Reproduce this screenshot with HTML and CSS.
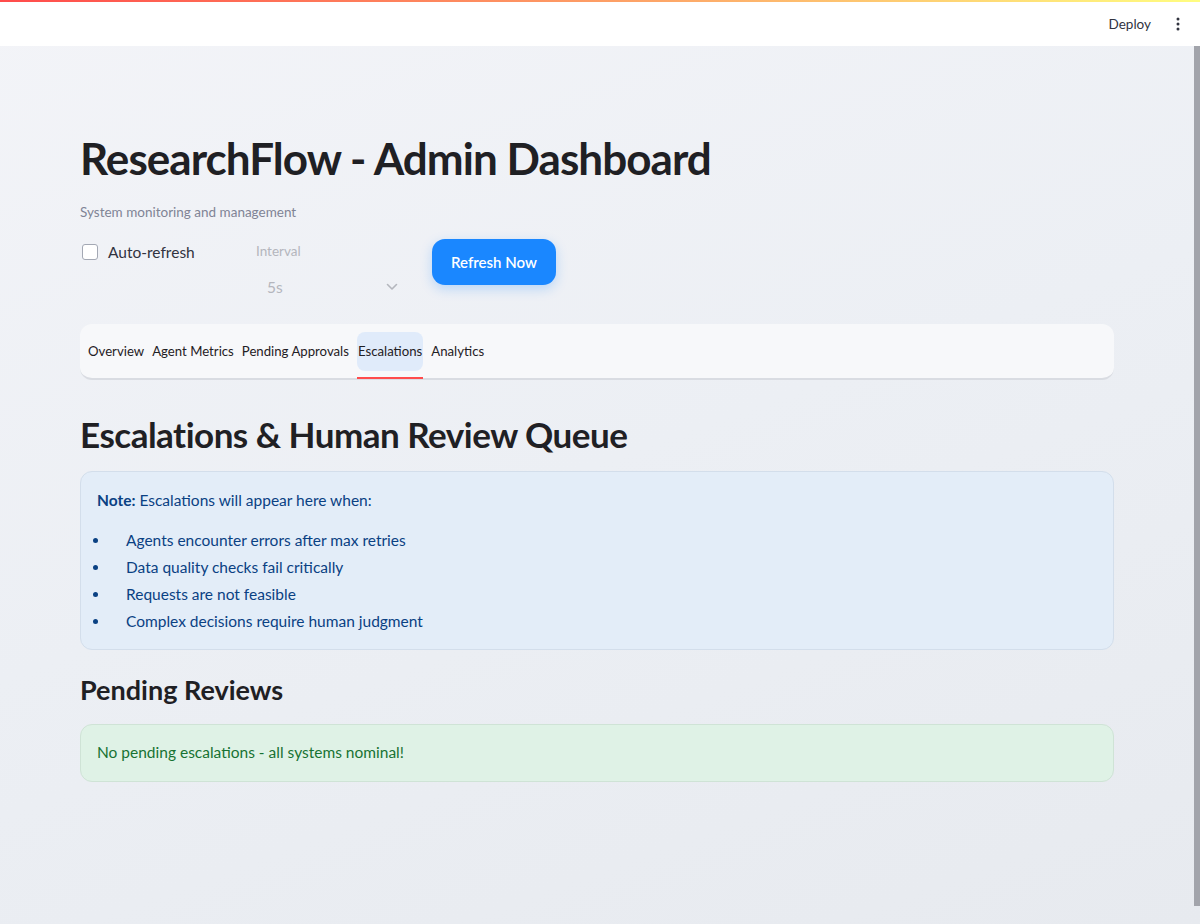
FILE: index.html
```html
<!DOCTYPE html>
<html lang="en">
<head>
<meta charset="utf-8">
<title>ResearchFlow - Admin Dashboard</title>
<link rel="stylesheet" href="styles.css">
</head>
<body>
<div class="app">
  <header class="topbar">
    <div class="decoration"></div>
    <div class="toolbar">
      <span class="deploy">Deploy</span>
      <span class="menu" aria-label="Main menu">
        <svg width="4" height="14" viewBox="0 0 4 14"><circle cx="2" cy="2" r="1.5" fill="#31333f"/><circle cx="2" cy="7" r="1.5" fill="#31333f"/><circle cx="2" cy="12" r="1.5" fill="#31333f"/></svg>
      </span>
    </div>
  </header>
  <main class="main">
    <div class="block">
      <h1 class="title">ResearchFlow - Admin Dashboard</h1>
      <p class="caption">System monitoring and management</p>

      <div class="controls">
        <label class="checkbox">
          <span class="box"></span>
          <span class="cb-label">Auto-refresh</span>
        </label>
        <div class="select">
          <div class="select-label">Interval</div>
          <div class="select-field">
            <span>5s</span>
            <svg width="12" height="8" viewBox="0 0 12 8"><path d="M1.5 1.5 L6 6 L10.5 1.5" fill="none" stroke="#b4b6bd" stroke-width="1.6" stroke-linecap="round" stroke-linejoin="round"/></svg>
          </div>
        </div>
        <button class="btn">Refresh Now</button>
      </div>

      <nav class="tabs">
        <span class="tab">Overview</span>
        <span class="tab">Agent Metrics</span>
        <span class="tab">Pending Approvals</span>
        <span class="tab active">Escalations</span>
        <span class="tab">Analytics</span>
      </nav>

      <h2 class="h2">Escalations &amp; Human Review Queue</h2>

      <div class="alert info">
        <p><strong>Note:</strong> Escalations will appear here when:</p>
        <ul>
          <li>Agents encounter errors after max retries</li>
          <li>Data quality checks fail critically</li>
          <li>Requests are not feasible</li>
          <li>Complex decisions require human judgment</li>
        </ul>
      </div>

      <h3 class="h3">Pending Reviews</h3>

      <div class="alert success">
        <p>No pending escalations - all systems nominal!</p>
      </div>
    </div>
  </main>
  <div class="scrollbar"></div>
</div>
</body>
</html>
```
FILE: styles.css
```css
* { box-sizing: border-box; }
html, body { margin: 0; padding: 0; height: 100%; }
body {
  font-family: "Lato", "Source Sans Pro", "Liberation Sans", sans-serif;
  color: #31333f;
  overflow: hidden;
}
.app {
  position: relative;
  height: 924px;
  background: linear-gradient(160deg, #f3f4f8 0%, #eceff4 50%, #e7eaef 100%);
}
.topbar {
  height: 46px;
  background: #ffffff;
}
.decoration {
  height: 2px;
  background: linear-gradient(90deg, #ff4b4b 0%, #fda668 55%, #fffd80 100%);
}
.toolbar {
  height: 44px;
  display: flex;
  justify-content: flex-end;
  align-items: center;
  gap: 25px;
  padding-right: 20px;
}
.deploy { font-size: 13.5px; color: #31333f; }
.menu { display: flex; align-items: center; }

.main { padding: 0 86px 0 80px; }
.block { width: 1034px; }

.title {
  margin: 84px 0 0;
  font-size: 44px;
  font-weight: 700;
  line-height: 56px;
  color: #1f2024;
  letter-spacing: -0.95px;
}
.caption {
  margin: 16px 0 0;
  font-size: 13.5px;
  line-height: 20px;
  color: #808495;
}
.controls {
  display: flex;
  align-items: flex-start;
  margin-top: 11px;
  height: 91px;
}
.checkbox {
  display: flex;
  align-items: center;
  gap: 10px;
  width: 176px;
  margin-top: 10px;
}
.box {
  width: 16px; height: 16px;
  margin-left: 2px;
  border: 1px solid #a3a8b4;
  border-radius: 3px;
  background: #fff;
}
.cb-label { font-size: 15.5px; color: #31333f; }
.select { width: 152px; margin-top: 8px; }
.select-label { font-size: 13.5px; color: #b4b6bd; line-height: 20px; }
.select-field {
  display: flex; justify-content: space-between; align-items: center;
  height: 36px;
  padding: 0 10px 0 11px;
  margin-top: 8px;
  font-size: 15.5px;
  color: #b4b6bd;
}
.btn {
  margin-left: 24px;
  margin-top: 6px;
  width: 124px; height: 46px;
  border: none;
  border-radius: 13px;
  background: #1a87ff;
  color: #fff;
  font-family: inherit;
  font-size: 15px;
  font-weight: 600;
  box-shadow: 0 4px 12px rgba(26, 135, 255, 0.25);
}

.tabs {
  display: flex;
  align-items: center;
  gap: 8px;
  height: 56px;
  padding: 1px 8px 0;
  background: #f7f8fa;
  border-radius: 12px;
  border-bottom: 2px solid #d9dce2;
}
.tab {
  font-size: 13.2px;
  color: #1f2024;
  padding: 11px 0;
  line-height: 17px;
  position: relative;
}
.tab.active {
  background: #e0ebfa;
  border-radius: 8px;
  padding: 11px 1px;
  margin-top: -1px;
}
.tab.active::after {
  content: "";
  position: absolute;
  left: 0; right: 0;
  bottom: -8px;
  height: 2px;
  background: #ff4b4b;
}

.h2 {
  margin: 31px 0 0;
  font-size: 35px;
  font-weight: 700;
  line-height: 46px;
  color: #1f2024;
  letter-spacing: -0.5px;
}
.alert {
  border-radius: 12px;
  padding: 16px;
  font-size: 15.5px;
  line-height: 27px;
}
.alert p { margin: 0; }
.info {
  margin-top: 14px;
  background: #e3edf8;
  border: 1px solid #d3deeb;
  color: #0a4183;
  padding: 15px 16px 14px;
}
.info ul { margin: 13px 0 0; padding-left: 13px; }
.info li { padding-left: 16px; }
.h3 {
  margin: 22px 0 0;
  font-size: 27px;
  font-weight: 700;
  line-height: 36px;
  color: #1f2024;
}
.success {
  margin-top: 16px;
  background: #dff2e6;
  border: 1px solid #cfe3d6;
  color: #177233;
  padding: 14px 16px 15px;
}
.scrollbar {
  position: absolute;
  right: 0; top: 46px;
  width: 6px; height: 860px;
  background: #a2a4ab;
}
```
